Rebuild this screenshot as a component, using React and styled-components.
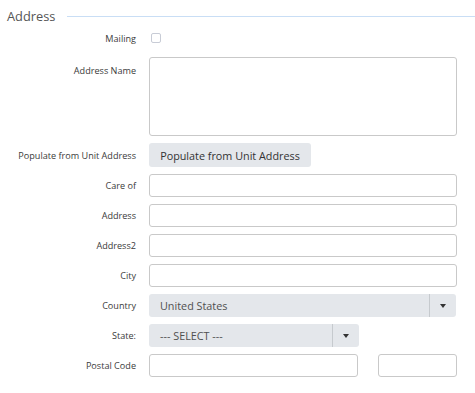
import React from "react";
import styled, { createGlobalStyle } from "styled-components";

const GlobalStyle = createGlobalStyle`
  html, body {
    margin: 0;
    padding: 0;
    background: #fff;
    font-family: "Open Sans", "Noto Sans", sans-serif;
  }
`;

const Panel = styled.div`
  width: 475px;
  padding: 7px 0 0 0;
`;

const Legend = styled.div`
  display: flex;
  align-items: center;
  height: 18px;
  padding-left: 7px;
  gap: 12px;
  font-size: 12.8px;
  color: #555;
  &::after {
    content: "";
    flex: 1;
    height: 1px;
    background: #c9def5;
    margin-top: 1px;
  }
`;

const Form = styled.div`
  display: grid;
  grid-template-columns: 136px 308px;
  column-gap: 13px;
  row-gap: 7px;
  padding-top: 2px;
`;

const Label = styled.div`
  display: flex;
  align-items: ${(p) => (p.$top ? "flex-start" : "center")};
  justify-content: flex-end;
  padding-top: ${(p) => (p.$top ? "7px" : "0")};
  font-size: 9.1px;
  color: #3a3a3a;
  white-space: nowrap;
`;

const Field = styled.div`
  display: flex;
  align-items: center;
  height: ${(p) => p.$h || 23}px;
  gap: 20px;
`;

const Check = styled.span`
  width: 8px;
  height: 8px;
  margin: -2px 0 0 2px;
  border: 1px solid #c8ccd6;
  border-radius: 2px;
`;

const Input = styled.div`
  box-sizing: border-box;
  width: ${(p) => p.$w || 308}px;
  height: ${(p) => p.$h || 23}px;
  border: 1px solid #c9c9c9;
  border-radius: 3px;
  background: #fff;
`;

const Button = styled.div`
  box-sizing: border-box;
  height: 24px;
  width: 162px;
  display: flex;
  align-items: center;
  justify-content: center;
  background: #e4e7eb;
  border-radius: 3px;
  font-size: 10.8px;
  color: #333;
`;

const Select = styled.div`
  box-sizing: border-box;
  width: ${(p) => p.$w}px;
  height: 23px;
  display: flex;
  align-items: stretch;
  background: #e4e7eb;
  border-radius: 3px;
  font-size: 10.8px;
  color: #505050;
`;

const SelectText = styled.span`
  flex: 1;
  display: flex;
  align-items: center;
  padding-left: 11px;
`;

const Arrow = styled.span`
  width: 26px;
  display: flex;
  align-items: center;
  justify-content: center;
  border-left: 1px solid #c6cace;
  &::before {
    content: "";
    border-left: 3px solid transparent;
    border-right: 3px solid transparent;
    border-top: 4px solid #333;
  }
`;

export default function App() {
  return (
    <Panel>
      <GlobalStyle />
      <Legend>Address</Legend>
      <Form>
        <Label>Mailing</Label>
        <Field>
          <Check />
        </Field>

        <Label $top>Address Name</Label>
        <Field $h={79}>
          <Input $h={79} />
        </Field>

        <Label>Populate from Unit Address</Label>
        <Field $h={24}>
          <Button>Populate from Unit Address</Button>
        </Field>

        <Label>Care of</Label>
        <Field>
          <Input />
        </Field>

        <Label>Address</Label>
        <Field>
          <Input />
        </Field>

        <Label>Address2</Label>
        <Field>
          <Input />
        </Field>

        <Label>City</Label>
        <Field>
          <Input />
        </Field>

        <Label>Country</Label>
        <Field>
          <Select $w={307}>
            <SelectText>United States</SelectText>
            <Arrow />
          </Select>
        </Field>

        <Label>State:</Label>
        <Field>
          <Select $w={210}>
            <SelectText>--- SELECT ---</SelectText>
            <Arrow />
          </Select>
        </Field>

        <Label>Postal Code</Label>
        <Field>
          <Input $w={210} />
          <Input $w={79} />
        </Field>
      </Form>
    </Panel>
  );
}
